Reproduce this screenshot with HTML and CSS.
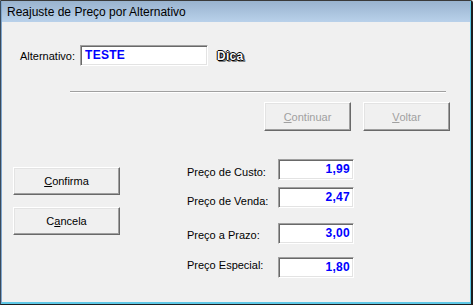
FILE: index.html
```html
<!DOCTYPE html>
<html>
<head>
<meta charset="utf-8">
<link rel="stylesheet" href="styles.css">
</head>
<body>
<div class="frame">
  <div class="window">
    <div class="titlebar">Reajuste de Preço por Alternativo</div>
    <div class="content">
      <div class="row-alt">
        <span class="lbl-alt">Alternativo:</span>
        <div class="field field-alt">TESTE</div>
        <span class="dica">Dica</span>
      </div>
      <div class="sep"></div>
      <div class="nav-buttons">
        <div class="btn btn-nav disabled"><u>C</u>ontinuar</div>
        <div class="btn btn-nav disabled"><u>V</u>oltar</div>
      </div>
      <div class="lower">
        <div class="actions">
          <div class="btn btn-act"><u>C</u>onfirma</div>
          <div class="btn btn-act">C<u>a</u>ncela</div>
        </div>
        <div class="prices">
          <div class="labels">
            <span class="plbl l1">Preço de Custo:</span>
            <span class="plbl l2">Preço de Venda:</span>
            <span class="plbl l3">Preço a Prazo:</span>
            <span class="plbl l4">Preço Especial:</span>
          </div>
          <div class="boxes">
            <div class="field num b1">1,99</div>
            <div class="field num b2">2,47</div>
            <div class="field num b3">3,00</div>
            <div class="field num b4">1,80</div>
          </div>
        </div>
      </div>
    </div>
  </div>
</div>
</body>
</html>
```

FILE: styles.css
```css
* { box-sizing: border-box; }
html, body { margin: 0; padding: 0; background: #f0f0f0; }
body {
  font-family: "Liberation Sans", Arial, sans-serif;
  font-size: 11px;
  color: #000;
}
.frame {
  width: 473px;
  height: 305px;
  border-top: 1px solid #3a3a3a;
  border-left: 1px solid #3a4a5a;
  border-right: 2px solid #1e1e1e;
  border-bottom: 1px solid #1e1e1e;
  border-top-right-radius: 3px;
}
.window {
  height: 100%;
  border-left: 1px solid #7fa6cf;
  border-right: 1px solid #5ec8e6;
  border-bottom: 2px solid #5ec8e6;
  background: #f0f0f0;
  display: flex;
  flex-direction: column;
}
.titlebar {
  height: 21px;
  background: linear-gradient(#99b3cf, #b9d1ea);
  font-size: 12px;
  line-height: 21px;
  padding-left: 5px;
  padding-top: 1px;
  color: #000;
}
.content {
  flex: 1;
  display: flex;
  flex-direction: column;
}
.row-alt {
  margin-top: 23px;
  display: flex;
  align-items: center;
  height: 21px;
}
.lbl-alt {
  width: 78px;
  padding-left: 18px;
}
.field {
  background: #fff;
  height: 21px;
  border-top: 1px solid #a0a0a0;
  border-left: 1px solid #a0a0a0;
  border-bottom: 1px solid #fff;
  border-right: 1px solid #fff;
  box-shadow: inset 1px 1px #696969, inset -1px -1px #e3e3e3;
  color: #0000ff;
  font-weight: bold;
  font-size: 12px;
  line-height: 19px;
  letter-spacing: 0.3px;
}
.field-alt {
  width: 128px;
  padding-left: 4px;
}
.dica {
  margin-left: 9px;
  font-weight: bold;
  font-size: 12px;
  color: #fafafa;
  letter-spacing: 0.3px;
  text-shadow: 1px 0 #000, -1px 0 #000, 0 1px #000, 0 -1px #000, 2px 2px #808080, 1px 2px #808080, 2px 1px #808080;
}
.sep {
  margin-top: 25px;
  margin-left: 68px;
  width: 376px;
  height: 2px;
  border-top: 1px solid #a0a0a0;
  border-bottom: 1px solid #fff;
}
.nav-buttons {
  margin-top: 9px;
  margin-left: 262px;
  display: flex;
  gap: 12px;
}
.btn {
  display: flex;
  align-items: center;
  justify-content: center;
  background: #f0f0f0;
  border-top: 1px solid #fff;
  border-left: 1px solid #fff;
  border-right: 1px solid #696969;
  border-bottom: 1px solid #696969;
  box-shadow: inset -1px -1px #a0a0a0, inset 1px 1px #e3e3e3;
  font-size: 11px;
}
.btn u { text-underline-offset: 1px; }
.btn-nav { width: 87px; height: 29px; }
.disabled { color: #a0a0a0; }
.lower {
  margin-top: 28px;
  display: flex;
}
.actions {
  margin-left: 11px;
  margin-top: 8px;
  width: 107px;
  display: flex;
  flex-direction: column;
  gap: 12px;
}
.btn-act { width: 107px; height: 28px; }
.prices {
  margin-left: 67px;
  display: flex;
}
.labels {
  width: 91px;
  display: flex;
  flex-direction: column;
}
.plbl { line-height: 13px; height: 13px; }
.l1 { margin-top: 7px; }
.l2 { margin-top: 16px; }
.l3 { margin-top: 21px; }
.l4 { margin-top: 17px; }
.boxes {
  display: flex;
  flex-direction: column;
}
.num {
  width: 76px;
  text-align: right;
  padding-right: 3px;
}
.b2 { margin-top: 7px; }
.b3 { margin-top: 15px; }
.b4 { margin-top: 13px; }
```
